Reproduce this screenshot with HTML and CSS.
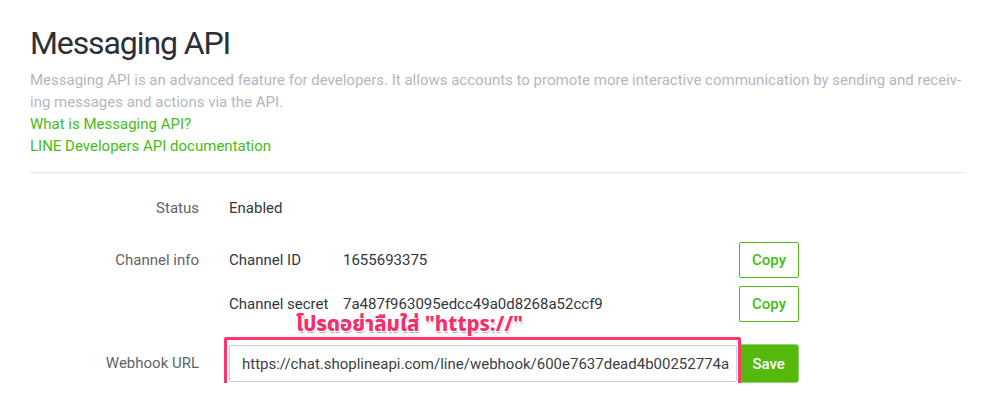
FILE: index.html
```html
<!DOCTYPE html>
<html lang="en">
<head>
<meta charset="utf-8">
<title>Messaging API</title>
<link rel="stylesheet" href="styles.css">
</head>
<body>
<div class="page">
  <h1 class="title">Messaging API</h1>
  <p class="desc">Messaging API is an advanced feature for developers. It allows accounts to promote more interactive communication by sending and receiv-<br>ing messages and actions via the API.</p>
  <a class="link" href="#">What is Messaging API?</a>
  <a class="link" href="#">LINE Developers API documentation</a>
  <div class="divider"></div>

  <div class="row row-status">
    <div class="label">Status</div>
    <div class="content"><span class="value">Enabled</span></div>
  </div>

  <div class="row row-channel">
    <div class="label">Channel info</div>
    <div class="content">
      <div class="sub">
        <span class="key">Channel ID</span>
        <span class="val">1655693375</span>
        <button class="btn-outline">Copy</button>
      </div>
      <div class="sub">
        <span class="key">Channel secret</span>
        <span class="val">7a487f963095edcc49a0d8268a52ccf9</span>
        <button class="btn-outline">Copy</button>
      </div>
    </div>
  </div>

  <div class="row row-webhook">
    <div class="label">Webhook URL</div>
    <div class="content webhook">
      <input class="input" type="text" value="https://chat.shoplineapi.com/line/webhook/600e7637dead4b00252774a">
      <button class="btn-solid">Save</button>
      <div class="note">โปรดอย่าลืมใส่ "https://"</div>
      <div class="highlight"></div>
    </div>
  </div>
</div>
</body>
</html>
```

FILE: styles.css
```css
html, body {
  margin: 0;
  padding: 0;
  background: #ffffff;
}
body {
  font-family: Roboto, "Liberation Sans", sans-serif;
  color: #33373d;
}
.page {
  width: 934px;
  padding: 23px 0 0 30px;
}
.title {
  margin: 0;
  font-size: 32px;
  line-height: 40px;
  font-weight: 400;
  letter-spacing: -1.1px;
  color: #2b2f36;
}
.desc {
  margin: 6px 0 0 0;
  font-size: 15px;
  line-height: 22px;
  color: #b3b8bf;
  white-space: nowrap;
}
.link {
  display: block;
  font-size: 15px;
  line-height: 22px;
  color: #45bd14;
  text-decoration: none;
}
.divider {
  height: 1px;
  background: #e4e4e4;
  margin-top: 15px;
}
.row {
  display: flex;
  align-items: flex-start;
}
.label {
  width: 169px;
  flex: none;
  text-align: right;
  font-size: 15px;
  color: #5f646b;
  margin-right: 30px;
}
.content {
  width: 570px;
  font-size: 15px;
}
.row-status {
  margin-top: 17px;
  height: 36px;
  align-items: center;
}
.value {
  color: #33373d;
}
.row-channel {
  margin-top: 16px;
}
.row-channel .label {
  line-height: 36px;
}
.sub {
  display: flex;
  align-items: center;
  height: 36px;
  margin-bottom: 8px;
}
.key {
  width: 114px;
  flex: none;
  color: #33373d;
}
.val {
  flex: 1;
  color: #33373d;
}
.btn-outline {
  width: 60px;
  height: 36px;
  border: 1px solid #52b818;
  border-radius: 2px;
  background: #fff;
  color: #45bd14;
  font-family: Roboto, "Liberation Sans", sans-serif;
  font-size: 15px;
  font-weight: 500;
  padding: 0;
}
.row-webhook {
  margin-top: 14px;
  align-items: center;
}
.webhook {
  position: relative;
  display: flex;
  align-items: center;
}
.input {
  box-sizing: border-box;
  width: 510px;
  height: 37px;
  border: 1px solid #c9cdd2;
  border-radius: 2px;
  padding: 0 0 0 12px;
  font-family: Roboto, "Liberation Sans", sans-serif;
  font-size: 15px;
  color: #3a3f45;
  outline: none;
}
.btn-solid {
  margin-left: 1px;
  width: 61px;
  height: 39px;
  border: 1px solid #8fd46a;
  border-radius: 3px;
  background: #55b80d;
  color: #ffffff;
  font-family: Roboto, "Liberation Sans", sans-serif;
  font-size: 15px;
  font-weight: 500;
  padding: 0;
}
.row-webhook .label {
  line-height: 39px;
}
.note {
  position: absolute;
  left: 67px;
  top: -30px;
  font-family: "Noto Sans Thai", "Noto Sans", Roboto, sans-serif;
  font-size: 20.4px;
  font-weight: 800;
  line-height: 22px;
  color: #f2306b;
  white-space: nowrap;
  text-shadow: -1px -1px 0 #fff, 1px -1px 0 #fff, -1px 1px 0 #fff, 1px 1px 0 #fff, 1px 2px 1px rgba(0,0,0,0.35);
}
.highlight {
  position: absolute;
  left: -5px;
  top: -7px;
  width: 511px;
  height: 49px;
  border: 3px solid #ff3670;
  border-radius: 2px;
  pointer-events: none;
}
```
